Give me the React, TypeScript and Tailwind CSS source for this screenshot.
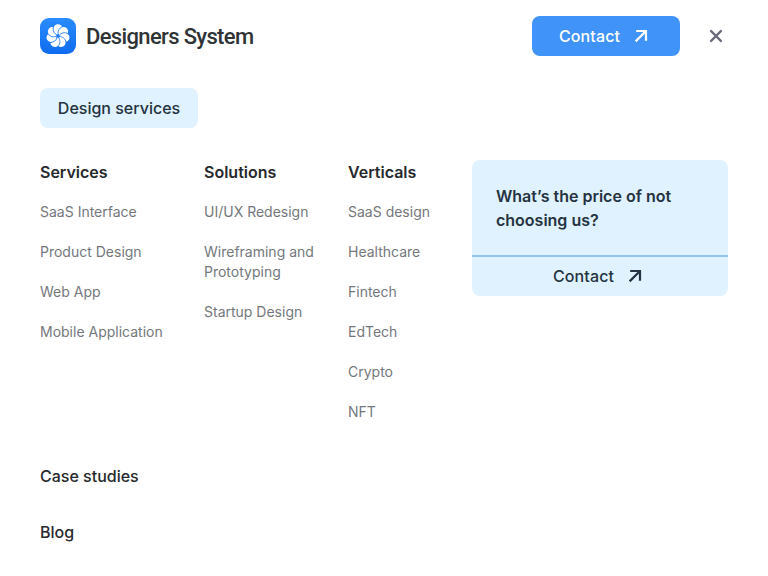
const petals = Array.from({ length: 7 }, (_, i) => (i * 360) / 7);

function Logo() {
  return (
    <svg width="36" height="36" viewBox="0 0 36 36" aria-hidden="true">
      <defs>
        <linearGradient id="logo-bg" x1="0" y1="0" x2="0" y2="1">
          <stop offset="0" stopColor="#2a8cff" />
          <stop offset="1" stopColor="#0f6bef" />
        </linearGradient>
      </defs>
      <rect width="36" height="36" rx="9" fill="url(#logo-bg)" />
      <circle cx="18" cy="18" r="8.8" fill="#fff" />
      {petals.map((angle) => (
        <circle key={angle} cx="18" cy="10.7" r="4.4" fill="#fff" transform={`rotate(${angle} 18 18)`} />
      ))}
      {petals.map((angle) => (
        <path
          key={angle}
          d="M18 17C15.4 14.2 15.4 10.8 18 7.6"
          fill="none"
          stroke="#2880f8"
          strokeWidth="0.85"
          transform={`rotate(${angle + 25.7} 18 18)`}
        />
      ))}
      <circle cx="18" cy="18" r="1.8" fill="#1f7bf6" />
    </svg>
  );
}

function ArrowUpRight() {
  return (
    <svg width="14" height="14" viewBox="0 0 14 14" fill="none" stroke="currentColor" strokeWidth="2.2" aria-hidden="true">
      <path d="M2.2 2H12V11.8M12 2L1.6 12.4" />
    </svg>
  );
}

const columns = [
  {
    title: "Services",
    width: "w-[164px]",
    items: ["SaaS Interface", "Product Design", "Web App", "Mobile Application"],
  },
  {
    title: "Solutions",
    width: "w-[144px]",
    items: ["UI/UX Redesign", "Wireframing and Prototyping", "Startup Design"],
  },
  {
    title: "Verticals",
    width: "w-[124px]",
    items: ["SaaS design", "Healthcare", "Fintech", "EdTech", "Crypto", "NFT"],
  },
];

export default function App() {
  return (
    <div className="h-[576px] w-[768px] overflow-hidden bg-white px-10 pt-4 font-['Inter',sans-serif] text-base text-[#26292d]">
      <header className="flex h-10 items-center">
        <Logo />
        <span className="ml-2.5 pt-0.5 font-['Roboto',sans-serif] text-[22px] leading-10 font-medium tracking-[-0.65px] text-[#303336]">
          Designers System
        </span>
        <button className="ml-auto flex h-10 w-[148px] items-center gap-3.5 rounded-lg bg-[#4093f8] pl-[27px] font-medium text-white">
          <span className="w-[61px] text-left tracking-[0.1px]">Contact</span>
          <ArrowUpRight />
        </button>
        <button className="ml-6 flex size-6 items-center justify-center text-[#6b6b7b]" aria-label="Close">
          <svg width="14" height="14" viewBox="0 0 14 14" fill="none" stroke="currentColor" strokeWidth="2.2">
            <path d="M1.4 1.4L12.6 12.6M12.6 1.4L1.4 12.6" />
          </svg>
        </button>
      </header>

      <button className="mt-8 flex h-10 w-[158px] items-center justify-center rounded-lg bg-[#e0f1ff] font-medium text-[#253341]">
        Design services
      </button>

      <div className="mt-8 flex h-[264px]">
        {columns.map((column) => (
          <section key={column.title} className={column.width}>
            <h2 className="leading-6 font-semibold">{column.title}</h2>
            <ul className="mt-[18px] flex flex-col gap-5 pr-7 text-sm leading-5 text-[#74787d]">
              {column.items.map((item) => (
                <li key={item} className={item.startsWith("Wire") ? "" : "whitespace-nowrap"}>
                  {item}
                </li>
              ))}
            </ul>
          </section>
        ))}
        <aside className="h-[136px] w-64 overflow-hidden rounded-lg bg-[#e0f1ff] text-[#253341]">
          <p className="h-[95px] px-6 pt-6 leading-6 font-semibold">What’s the price of not choosing us?</p>
          <button className="flex h-[41px] w-full items-center gap-3.5 border-t-2 border-[#93c3f0] pb-0.5 pl-[81px] font-medium">
            <span className="w-[61px] text-left tracking-[0.1px]">Contact</span>
            <ArrowUpRight />
          </button>
        </aside>
      </div>

      <nav className="mt-10 flex flex-col gap-8 leading-6 font-medium">
        <a>Case studies</a>
        <a>Blog</a>
      </nav>
    </div>
  );
}
